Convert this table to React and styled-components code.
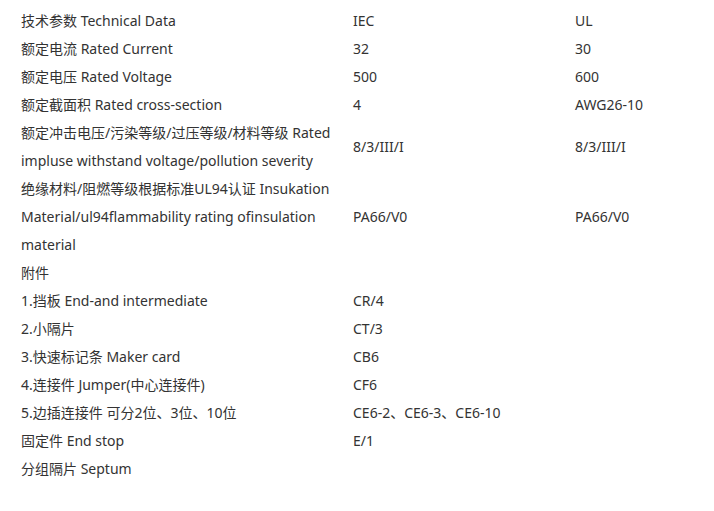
import React from "react";
import styled, { createGlobalStyle } from "styled-components";

const Global = createGlobalStyle`
  html, body { margin: 0; padding: 0; background: #fff; }
  body {
    font-family: "Noto Sans", "Noto Sans CJK SC", sans-serif;
    font-size: 14px;
    color: #333;
  }
`;

const Page = styled.div`
  padding: 7px 21px 0 21px;
`;

const Table = styled.div`
  display: grid;
  grid-template-columns: 332px 222px 1fr;
  align-items: center;
`;

const Cell = styled.div`
  line-height: 28px;
  white-space: nowrap;
  color: #333;
`;

const rows = [
  [["技术参数 Technical Data"], "IEC", "UL"],
  [["额定电流 Rated Current"], "32", "30"],
  [["额定电压 Rated Voltage"], "500", "600"],
  [["额定截面积 Rated cross-section"], "4", "AWG26-10"],
  [["额定冲击电压/污染等级/过压等级/材料等级 Rated", "impluse withstand voltage/pollution severity"], "8/3/III/I", "8/3/III/I"],
  [["绝缘材料/阻燃等级根据标准UL94认证 Insukation", "Material/ul94flammability rating ofinsulation", "material"], "PA66/V0", "PA66/V0"],
  [["附件"], "", ""],
  [["1.挡板 End-and intermediate"], "CR/4", ""],
  [["2.小隔片"], "CT/3", ""],
  [["3.快速标记条 Maker card"], "CB6", ""],
  [["4.连接件 Jumper(中心连接件)"], "CF6", ""],
  [["5.边插连接件 可分2位、3位、10位"], "CE6-2、CE6-3、CE6-10", ""],
  [["固定件 End stop"], "E/1", ""],
  [["分组隔片 Septum"], "", ""],
];

export default function App() {
  return (
    <Page>
      <Global />
      <Table>
        {rows.map(([label, a, b], i) => (
          <React.Fragment key={i}>
            <Cell>
              {label.map((l, j) => (
                <React.Fragment key={j}>
                  {j > 0 && <br />}
                  {l}
                </React.Fragment>
              ))}
            </Cell>
            <Cell>{a || "\u00a0"}</Cell>
            <Cell>{b || "\u00a0"}</Cell>
          </React.Fragment>
        ))}
      </Table>
    </Page>
  );
}
